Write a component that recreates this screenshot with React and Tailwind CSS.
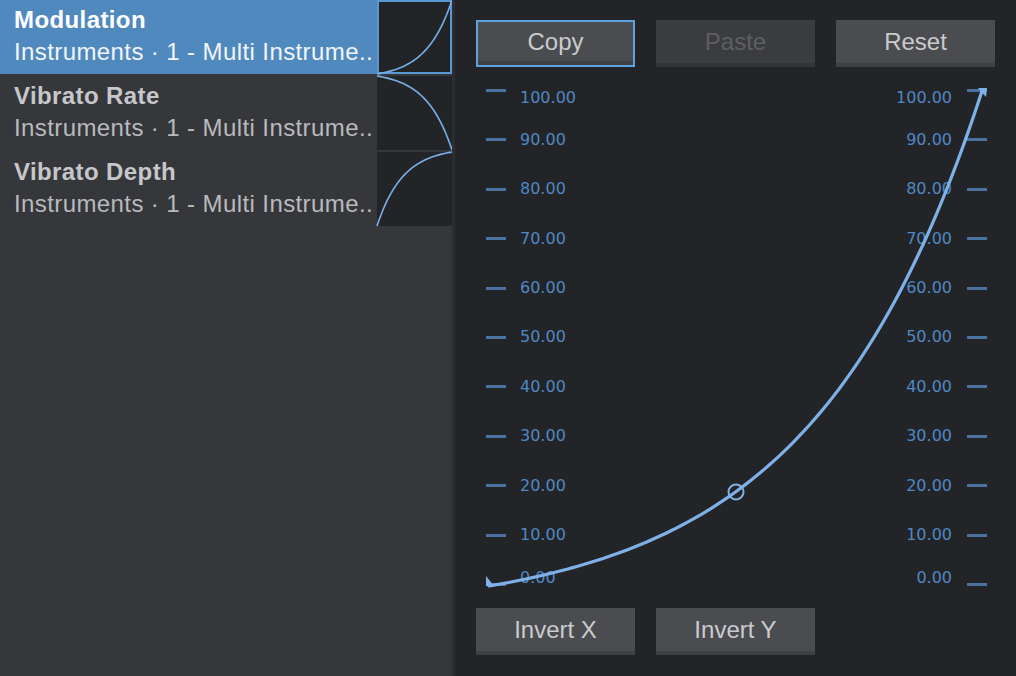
import React from 'react';

const rows = [
  { title: 'Modulation', kind: 'in', selected: true },
  { title: 'Vibrato Rate', kind: 'fall' },
  { title: 'Vibrato Depth', kind: 'out' },
];

const ticks = ['100.00', '90.00', '80.00', '70.00', '60.00', '50.00', '40.00', '30.00', '20.00', '10.00', '0.00'];

// exponential ease used by the editor
const K = 2.9;
const ease = (t) => (Math.exp(K * t) - 1) / (Math.exp(K) - 1);

const thumbPath = (kind) => {
  const pts = [];
  for (let i = 0; i <= 40; i++) {
    const t = i / 40;
    let v;
    if (kind === 'in') v = ease(t);
    else if (kind === 'fall') v = 1 - ease(t);
    else v = 1 - ease(1 - t);
    pts.push(`${(t * 72).toFixed(2)},${(72 - v * 72).toFixed(2)}`);
  }
  return 'M' + pts.join(' L');
};

const curvePath = () => {
  const pts = [];
  for (let i = 0; i <= 100; i++) {
    const t = i / 100;
    const x = 13 + 493 * t;
    const y = 497 - 495 * ease(t);
    pts.push(`${x.toFixed(2)},${y.toFixed(2)}`);
  }
  return 'M' + pts.join(' L');
};

const Thumb = ({ kind, selected }) => (
  <div
    className={
      'w-[75px] h-[74px] shrink-0 bg-[#232427] ' +
      (selected ? 'shadow-[inset_0_0_0_2px_#5a98d4]' : '')
    }
  >
    <svg viewBox="0 0 72 72" className="w-full h-full overflow-visible" preserveAspectRatio="none">
      <path d={thumbPath(kind)} fill="none" stroke="#78aee6" strokeWidth="1.6" />
    </svg>
  </div>
);

const Button = ({ label, focused, disabled }) => (
  <button
    className={
      'w-[159px] h-[47px] flex flex-col text-[24px] ' +
      (disabled ? 'bg-[#3b3c40] text-[#5e5f63] ' : 'bg-[#4b4c50] text-[#cacbcd] ') +
      (focused ? 'border-2 border-[#5ba2e2]' : '')
    }
  >
    <span className="flex-1 flex items-center justify-center leading-none">{label}</span>
    <span className={'h-[4px] w-full ' + (disabled ? 'bg-[#333438]' : 'bg-[#3f4044]')} />
  </button>
);

export default function App() {
  return (
    <div
      className="w-[1016px] h-[676px] flex bg-[#232427] overflow-hidden"
      style={{ fontFamily: '"Liberation Sans", Arial, sans-serif' }}
    >
      {/* instrument list */}
      <div className="w-[452px] shrink-0 bg-[#36373b] flex flex-col gap-[2px]">
        {rows.map((r) => (
          <div
            key={r.title}
            className={'h-[74px] flex items-stretch ' + (r.selected ? 'bg-[#5089bd]' : '')}
          >
            <div className="flex-1 min-w-0 pl-[14px] pt-[6px] flex flex-col overflow-hidden tracking-[0.4px]">
              <div className={'text-[24px] font-bold leading-[28px] ' + (r.selected ? 'text-white' : 'text-[#c6c7cb]')}>
                {r.title}
              </div>
              <div className={'text-[24px] leading-[36px] whitespace-nowrap ' + (r.selected ? 'text-[#f2f5f8]' : 'text-[#b9babe]')}>
                Instruments · 1 - Multi Instrume..
              </div>
            </div>
            <Thumb kind={r.kind} selected={r.selected} />
          </div>
        ))}
      </div>
      <div className="w-[3px] shrink-0 bg-[#2c2d30]" />

      {/* curve editor */}
      <div className="flex-1 pl-[21px] pt-[20px] flex flex-col">
        <div className="flex gap-[21px]">
          <Button label="Copy" focused />
          <Button label="Paste" disabled />
          <Button label="Reset" />
        </div>

        <div
          className="relative w-[519px] h-[497px] mt-[22px] flex flex-col justify-between text-[16px] text-[#4f88c4]"
          style={{ fontFamily: '"DejaVu Sans", Verdana, sans-serif' }}
        >
          {ticks.map((t, i) => (
            <div key={t} className="h-[3px] flex items-center justify-between">
              <div className="flex items-center">
                <span className="ml-[10px] w-[20px] h-[3px] bg-[#4a72a0]" />
                <span
                  className={
                    'ml-[14px] ' + (i === 0 ? 'translate-y-[7px]' : i === 10 ? '-translate-y-[6px]' : '')
                  }
                >
                  {t}
                </span>
              </div>
              <div className="flex items-center">
                <span className={i === 0 ? 'translate-y-[7px]' : i === 10 ? '-translate-y-[6px]' : ''}>{t}</span>
                <span className="ml-[15px] mr-[8px] w-[20px] h-[3px] bg-[#4a72a0]" />
              </div>
            </div>
          ))}

          <svg className="absolute left-0 top-0 w-[519px] h-[497px] overflow-visible" viewBox="0 0 519 497">
            <path d={curvePath()} fill="none" stroke="#7db1e8" strokeWidth="3.2" strokeLinecap="round" />
            <circle cx="260" cy="403" r="7.5" fill="none" stroke="#7db1e8" strokeWidth="2" />
            <polygon points="502,-1 511,-1 510,8" fill="#7db1e8" />
            <polygon points="10,487 10,497 18,497" fill="#7db1e8" />
          </svg>
        </div>

        <div className="flex gap-[21px] mt-[22px]">
          <Button label="Invert X" />
          <Button label="Invert Y" />
        </div>
      </div>
    </div>
  );
}
